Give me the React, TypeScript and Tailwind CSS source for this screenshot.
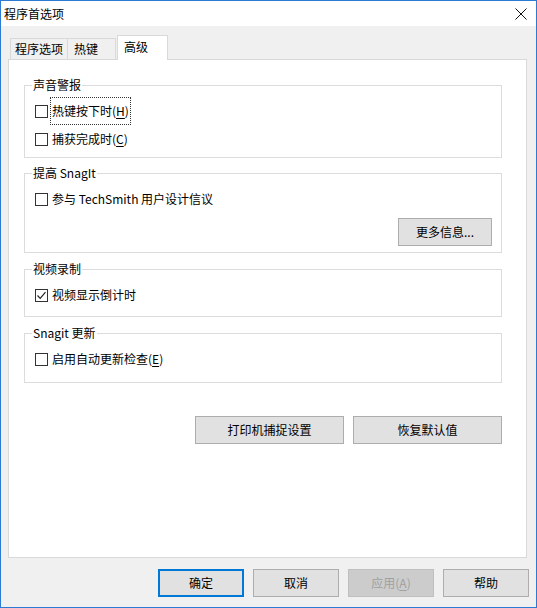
import React from "react";

const font = { fontFamily: '"Noto Sans CJK SC", "Noto Sans", sans-serif' };

function Box({ checked = false }: { checked?: boolean }) {
  return (
    <span className="w-[13px] h-[13px] shrink-0 border border-[#333333] bg-white flex items-center justify-center">
      {checked && (
        <svg width="11" height="11" viewBox="0 0 11 11">
          <path d="M1.5 5.5 L4.2 8.3 L9.5 2.2" fill="none" stroke="#222" strokeWidth="1.2" />
        </svg>
      )}
    </span>
  );
}

function Check({
  label,
  keyChar,
  checked,
  focused,
}: {
  label: string;
  keyChar?: string;
  checked?: boolean;
  focused?: boolean;
}) {
  return (
    <div className="h-[28px] flex items-center pl-[10px]">
      <Box checked={checked} />
      <span
        className={`ml-[2px] h-[28px] flex items-center px-[1px] ${
          focused ? "border border-dotted border-[#333]" : "border border-transparent"
        }`}
      >
        {label}
        {keyChar && (
          <>
            (<span className="underline underline-offset-2">{keyChar}</span>)
          </>
        )}
      </span>
    </div>
  );
}

function Group({ title, h, children }: { title: string; h: string; children: React.ReactNode }) {
  return (
    <div className={`relative ml-[15px] mr-[24px] border border-[#dcdcdc] pt-[11px] ${h}`}>
      <span className="absolute -top-[9px] left-[7px] px-[1px] bg-white leading-[16px]">{title}</span>
      {children}
    </div>
  );
}

function Btn({
  children,
  w,
  primary,
  disabled,
}: {
  children: React.ReactNode;
  w: string;
  primary?: boolean;
  disabled?: boolean;
}) {
  return (
    <div
      className={`${w} h-[28px] flex items-center justify-center ${
        primary
          ? "border-2 border-[#0078d7] bg-[#e1e1e1] text-black"
          : disabled
          ? "border border-[#bfbfbf] bg-[#cccccc] text-[#a0a0a0]"
          : "border border-[#adadad] bg-[#e1e1e1] text-black"
      }`}
    >
      {children}
    </div>
  );
}

export default function App() {
  return (
    <div
      style={font}
      className="w-[537px] h-[608px] border border-[#2b7ad3] bg-[#f0f0f0] flex flex-col text-[12px] leading-[16px] text-black"
    >
      {/* title bar */}
      <div className="h-[25px] bg-white flex items-center justify-between pl-[3px] pr-[9px]">
        <span>程序首选项</span>
        <svg width="12" height="12" viewBox="0 0 12 12">
          <path d="M0.5 0.5 L11.5 11.5 M11.5 0.5 L0.5 11.5" stroke="#111" strokeWidth="1" />
        </svg>
      </div>

      <div className="flex-1 flex flex-col pt-[9px] pl-[7px] pr-[9px]">
        {/* tabs */}
        <div className="h-[24px] flex items-end pl-[2px]">
          <div className="w-[58px] h-[21px] border border-b-0 border-[#d9d9d9] bg-[#f0f0f0] pl-[4px] flex items-center">
            程序选项
          </div>
          <div className="w-[48px] h-[21px] border border-l-0 border-b-0 border-[#d9d9d9] bg-[#f0f0f0] pl-[6px] flex items-center">
            热键
          </div>
          <div className="relative z-10 ml-[1px] -mb-px w-[51px] h-[25px] border border-b-0 border-[#d9d9d9] bg-white pl-[6px] pb-[3px] flex items-center">
            高级
          </div>
        </div>

        {/* panel */}
        <div className="h-[499px] border border-[#d9d9d9] bg-white flex flex-col">
          <div className="mt-[25px]">
            <Group title="声音警报" h="h-[73px]">
              <Check label="热键按下时" keyChar="H" focused />
              <Check label="捕获完成时" keyChar="C" />
            </Group>
          </div>
          <div className="mt-[15px]">
            <Group title="提高 SnagIt" h="h-[80px]">
              <Check label="参与 TechSmith 用户设计信议" />
              <div className="flex justify-end pr-[9px] mt-[5px]">
                <Btn w="w-[94px]">更多信息...</Btn>
              </div>
            </Group>
          </div>
          <div className="mt-[16px]">
            <Group title="视频录制" h="h-[48px]">
              <Check label="视频显示倒计时" checked />
            </Group>
          </div>
          <div className="mt-[16px]">
            <Group title="Snagit 更新" h="h-[50px]">
              <Check label="启用自动更新检查" keyChar="E" />
            </Group>
          </div>
          <div className="mt-[33px] flex justify-end gap-[9px] pr-[24px]">
            <Btn w="w-[149px]">打印机捕捉设置</Btn>
            <Btn w="w-[149px]">恢复默认值</Btn>
          </div>
        </div>

        {/* dialog buttons */}
        <div className="mt-[11px] flex justify-end gap-[9px] -mr-[2px]">
          <Btn w="w-[86px]" primary>
            确定
          </Btn>
          <Btn w="w-[86px]">取消</Btn>
          <Btn w="w-[86px]" disabled>
            应用(<span className="underline underline-offset-2">A</span>)
          </Btn>
          <Btn w="w-[86px]">帮助</Btn>
        </div>
      </div>
    </div>
  );
}
